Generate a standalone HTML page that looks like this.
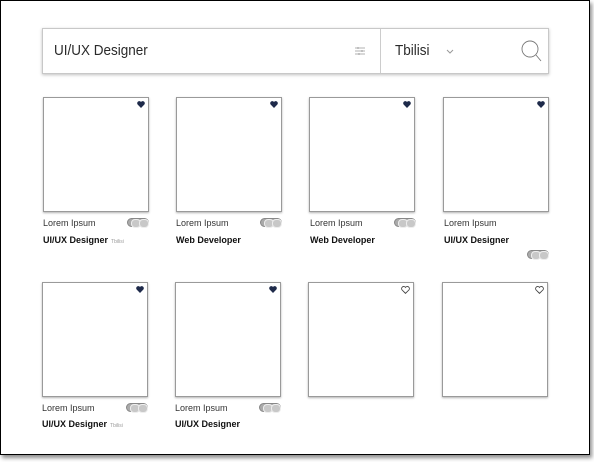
<!DOCTYPE html>
<html><head><meta charset="utf-8"><style>
*{margin:0;padding:0;box-sizing:border-box}
html,body{width:594px;height:462px;background:#fff;overflow:hidden;font-family:"Liberation Sans",sans-serif}
.frame{position:absolute;left:0;top:0;width:590px;height:455px;border:1.5px solid #000;box-shadow:2px 3px 4px rgba(0,0,0,.45);background:#fff}
.search{position:absolute;left:42px;top:28px;width:507px;height:46px;border:1px solid #c8c8c8;box-shadow:0 1px 3px rgba(0,0,0,.25);background:#fff}
.q{position:absolute;left:11px;top:13px;font-size:15px;color:#2a2a2a;transform:scaleX(.9);transform-origin:left}
.div{position:absolute;left:337px;top:0;width:1px;height:44px;background:#ccc}
.city{position:absolute;left:352px;top:13px;font-size:15px;color:#2a2a2a;transform:scaleX(.9);transform-origin:left}
.card{position:absolute;width:106px;height:115px;border:1px solid #9a9a9a;box-shadow:0 1px 2px rgba(0,0,0,.3);background:#fff}
.heart{position:absolute;right:3px;top:3px}
.l{position:absolute;font-size:9px;color:#333}
.t{position:absolute;font-size:9px;font-weight:bold;color:#111}
.s{font-size:5px;color:#999;font-weight:normal;margin-left:3px}
.pill{position:absolute;width:22px;height:9px;border-radius:4.5px;background:#aaa;border:1px solid #888}
.pill:before,.pill:after{content:"";position:absolute;top:0;width:8px;height:7px;border-radius:4px;border:1px solid #eee;background:#c8c8c8}
.pill:before{left:3px}.pill:after{left:11px}
</style></head><body>
<div class="frame"></div>
<div class="search">
<div class="q">UI/UX Designer</div>
<svg style="position:absolute;left:311px;top:16px" width="12" height="12" viewBox="0 0 12 12" stroke="#999" stroke-width=".8" fill="none"><path d="M1 3h10M1 6h10M1 9h10M4 2v2M8 5v2M5 8v2"/></svg>
<div class="div"></div>
<div class="city">Tbilisi</div>
<svg style="position:absolute;left:403px;top:20px" width="8" height="6" viewBox="0 0 8 6" stroke="#999" fill="none"><path d="M1 1l3 3 3-3"/></svg>
<svg style="position:absolute;left:478px;top:10px" width="22" height="24" viewBox="0 0 22 24" stroke="#777" stroke-width=".9" fill="none"><circle cx="9" cy="10" r="8"/><path d="M15 16l5 6"/></svg>
</div>

<div class="card" style="left:43px;top:97px"><svg class="heart" width="8" height="7" viewBox="0 0 8 7"><path d="M4 7L.6 3.5A2 2 0 0 1 4 1a2 2 0 0 1 3.4 2.5z" fill="#1e2a4a"/></svg></div>
<div class="card" style="left:176px;top:97px"><svg class="heart" width="8" height="7" viewBox="0 0 8 7"><path d="M4 7L.6 3.5A2 2 0 0 1 4 1a2 2 0 0 1 3.4 2.5z" fill="#1e2a4a"/></svg></div>
<div class="card" style="left:309px;top:97px"><svg class="heart" width="8" height="7" viewBox="0 0 8 7"><path d="M4 7L.6 3.5A2 2 0 0 1 4 1a2 2 0 0 1 3.4 2.5z" fill="#1e2a4a"/></svg></div>
<div class="card" style="left:443px;top:97px"><svg class="heart" width="8" height="7" viewBox="0 0 8 7"><path d="M4 7L.6 3.5A2 2 0 0 1 4 1a2 2 0 0 1 3.4 2.5z" fill="#1e2a4a"/></svg></div>

<div class="l" style="left:43px;top:218px">Lorem Ipsum</div><div class="pill" style="left:127px;top:218px"></div>
<div class="t" style="left:43px;top:235px">UI/UX Designer<span class="s">Tbilisi</span></div>
<div class="l" style="left:176px;top:218px">Lorem Ipsum</div><div class="pill" style="left:260px;top:218px"></div>
<div class="t" style="left:176px;top:235px">Web Developer</div>
<div class="l" style="left:310px;top:218px">Lorem Ipsum</div><div class="pill" style="left:394px;top:218px"></div>
<div class="t" style="left:310px;top:235px">Web Developer</div>
<div class="l" style="left:444px;top:218px">Lorem Ipsum</div>
<div class="t" style="left:444px;top:235px">UI/UX Designer</div>
<div class="pill" style="left:527px;top:250px"></div>

<div class="card" style="left:42px;top:282px"><svg class="heart" width="8" height="7" viewBox="0 0 8 7"><path d="M4 7L.6 3.5A2 2 0 0 1 4 1a2 2 0 0 1 3.4 2.5z" fill="#1e2a4a"/></svg></div>
<div class="card" style="left:175px;top:282px"><svg class="heart" width="8" height="7" viewBox="0 0 8 7"><path d="M4 7L.6 3.5A2 2 0 0 1 4 1a2 2 0 0 1 3.4 2.5z" fill="#1e2a4a"/></svg></div>
<div class="card" style="left:308px;top:282px"><svg class="heart" width="9" height="8" viewBox="0 0 8 7"><path d="M4 6.5L.9 3.4A1.8 1.8 0 0 1 4 1.2a1.8 1.8 0 0 1 3.1 2.2z" fill="none" stroke="#444" stroke-width=".8"/></svg></div>
<div class="card" style="left:442px;top:282px"><svg class="heart" width="9" height="8" viewBox="0 0 8 7"><path d="M4 6.5L.9 3.4A1.8 1.8 0 0 1 4 1.2a1.8 1.8 0 0 1 3.1 2.2z" fill="none" stroke="#444" stroke-width=".8"/></svg></div>

<div class="l" style="left:42px;top:403px">Lorem Ipsum</div><div class="pill" style="left:126px;top:403px"></div>
<div class="t" style="left:42px;top:419px">UI/UX Designer<span class="s">Tbilisi</span></div>
<div class="l" style="left:175px;top:403px">Lorem Ipsum</div><div class="pill" style="left:259px;top:403px"></div>
<div class="t" style="left:175px;top:419px">UI/UX Designer</div>
</body></html>
